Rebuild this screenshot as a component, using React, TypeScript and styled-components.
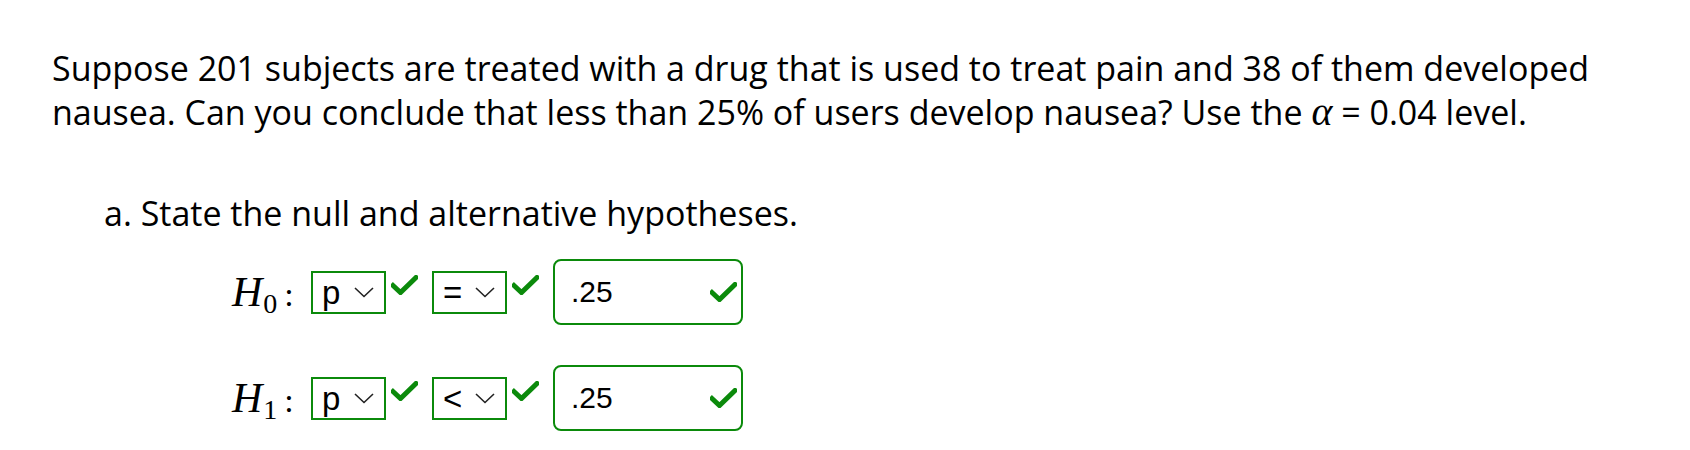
import styled, { createGlobalStyle } from "styled-components";

const GREEN = "#0b8a0b";

const GlobalStyle = createGlobalStyle`
    html, body {
        margin: 0;
        background: #ffffff;
    }
    body {
        font-family: "Open Sans", "Noto Sans", sans-serif;
        color: #000000;
    }
`;

interface Hypothesis {
    sub: string;
    param: string;
    relation: string;
    value: string;
}

const hypotheses: Hypothesis[] = [
    { sub: "0", param: "p", relation: "=", value: ".25" },
    { sub: "1", param: "p", relation: "<", value: ".25" },
];

function Check({ size = 27 }: { size?: number }) {
    return (
        <CheckIcon width={size} height={(size * 20) / 27} viewBox="0 0 27 20">
            <path
                d="M2 10.5 L9.5 17.5 L25 2.5"
                fill="none"
                stroke={GREEN}
                strokeWidth="5"
                strokeLinecap="square"
            />
        </CheckIcon>
    );
}

function Chevron() {
    return (
        <svg width="20" height="11" viewBox="0 0 20 11">
            <path
                d="M1 1 L10 9.5 L19 1"
                fill="none"
                stroke="#222"
                strokeWidth="1.6"
            />
        </svg>
    );
}

function App() {
    return (
        <Page>
            <GlobalStyle />
            <Prompt>
                Suppose 201 subjects are treated with a drug that is used to
                treat pain and 38 of them developed
                <br />
                nausea. Can you conclude that less than 25% of users develop
                nausea? Use the <Alpha>α</Alpha> = 0.04 level.
            </Prompt>
            <Part>
                <PartTitle>a. State the null and alternative hypotheses.</PartTitle>
                <Rows>
                    {hypotheses.map((h) => (
                        <Row key={h.sub}>
                            <MathLabel>
                                <MathH>H</MathH>
                                <MathSub>{h.sub}</MathSub>
                                <MathColon>:</MathColon>
                            </MathLabel>
                            <Select>
                                <SelectValue>{h.param}</SelectValue>
                                <Chevron />
                            </Select>
                            <Check />
                            <Select>
                                <SelectValue>{h.relation}</SelectValue>
                                <Chevron />
                            </Select>
                            <Check />
                            <AnswerBox>
                                <AnswerValue>{h.value}</AnswerValue>
                                <Check />
                            </AnswerBox>
                        </Row>
                    ))}
                </Rows>
            </Part>
        </Page>
    );
}

const Page = styled.div`
    padding: 46px 0 0 52px;
`;
const Prompt = styled.p`
    margin: 0;
    font-size: 34px;
    line-height: 44px;
    white-space: nowrap;
`;
const Alpha = styled.span`
    font-family: "Liberation Serif", "DejaVu Serif", serif;
    font-style: italic;
    font-size: 40px;
    line-height: 1;
`;
const Part = styled.div`
    padding: 57px 0 0 52px;
`;
const PartTitle = styled.div`
    font-size: 34px;
    line-height: 44px;
    white-space: nowrap;
`;
const Rows = styled.div`
    display: flex;
    flex-direction: column;
    gap: 40px;
    padding: 24px 0 0 128px;
`;
const Row = styled.div`
    display: flex;
    align-items: center;
    height: 66px;
`;
const MathLabel = styled.div`
    display: flex;
    align-items: baseline;
    font-family: "Liberation Serif", "DejaVu Serif", serif;
    width: 79px;
`;
const MathH = styled.span`
    font-style: italic;
    font-size: 42px;
`;
const MathSub = styled.span`
    font-size: 28px;
    position: relative;
    top: 7px;
    margin-left: 1px;
`;
const MathColon = styled.span`
    font-size: 34px;
    margin-left: 7px;
`;
const Select = styled.div`
    box-sizing: border-box;
    width: 75px;
    height: 43px;
    border: 2px solid ${GREEN};
    display: flex;
    align-items: center;
    gap: 10px;
    padding-left: 9px;
`;
const SelectValue = styled.span`
    font-family: "Liberation Sans", Arial, sans-serif;
    font-size: 33px;
    width: 22px;
    line-height: 1;
`;
const CheckIcon = styled.svg`
    margin: 0 14px 14px 5px;
    flex-shrink: 0;
`;
const AnswerBox = styled.div`
    box-sizing: border-box;
    width: 190px;
    height: 66px;
    border: 2px solid ${GREEN};
    border-radius: 8px;
    display: flex;
    align-items: center;
    justify-content: space-between;
    padding: 0 0 0 16px;
    svg {
        margin: 0 4px 0 0;
    }
`;
const AnswerValue = styled.span`
    font-family: "Liberation Sans", Arial, sans-serif;
    font-size: 30px;
`;

export default App;
